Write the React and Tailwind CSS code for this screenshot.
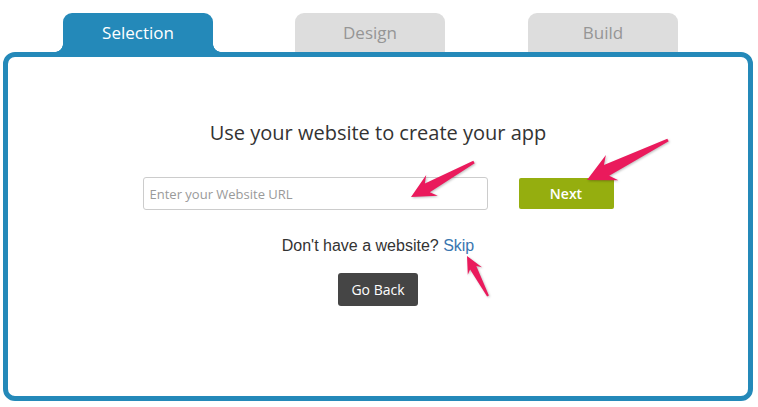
import React from "react";

const arrowPoints = (tail, tip, head, spread, neck, tailW) => {
  const dx = tail[0] - tip[0];
  const dy = tail[1] - tip[1];
  const len = Math.hypot(dx, dy);
  const ux = dx / len;
  const uy = dy / len;
  const px = -uy;
  const py = ux;
  const at = (a, b) =>
    `${(tip[0] + ux * a + px * b).toFixed(1)},${(tip[1] + uy * a + py * b).toFixed(1)}`;
  return [
    at(0, 0),
    at(head, -spread),
    at(head * 0.78, -neck),
    at(len, -tailW),
    at(len, tailW),
    at(head * 0.78, neck),
    at(head, spread),
  ].join(" ");
};

const Tab = ({ label, active }) => (
  <div
    className={`relative w-[150px] h-[39px] rounded-t-[9px] flex items-center justify-center text-[17px] ${
      active ? "bg-[#2489b9] text-white" : "bg-[#dddddd] text-[#959595]"
    }`}
  >
    {active && (
      <>
        <span className="absolute left-[-8px] bottom-0 w-[8px] h-[8px] bg-[radial-gradient(circle_at_0_0,transparent_7.5px,#2489b9_8px)]" />
        <span className="absolute right-[-8px] bottom-0 w-[8px] h-[8px] bg-[radial-gradient(circle_at_100%_0,transparent_7.5px,#2489b9_8px)]" />
      </>
    )}
    {label}
  </div>
);

export default function App() {
  return (
    <div className="relative w-[758px] h-[407px] bg-white overflow-hidden font-['Open_Sans',sans-serif]">
      {/* Steps */}
      <div className="flex pl-[63px] pt-[13px] gap-[82px]">
        <Tab label="Selection" active />
        <Tab label="Design" />
        <div className="ml-[1px]">
          <Tab label="Build" />
        </div>
      </div>

      {/* Panel */}
      <div className="ml-[3px] w-[750px] h-[349px] border-[5px] border-[#2489b9] rounded-[12px] flex flex-col items-center">
        <h1 className="mt-[62px] text-[20px] leading-[28px] text-[#333333]">
          Use your website to create your app
        </h1>

        <div className="mt-[30px] flex items-center gap-[31px]">
          <input
            type="text"
            placeholder="Enter your Website URL"
            className="w-[345px] h-[33px] border border-[#cccccc] rounded-[3px] pl-[6px] text-[13px] text-[#555] placeholder:text-[#9a9a9a] outline-none"
          />
          <button className="w-[95px] h-[31px] bg-[#95ae0f] rounded-[2px] text-white text-[14px] font-semibold">
            Next
          </button>
        </div>

        <p className="mt-[26px] text-[16px] leading-[20px] text-[#333333] font-['Liberation_Sans',Arial,sans-serif]">
          Don't have a website? <span className="text-[#3a76b0]">Skip</span>
        </p>

        <button className="mt-[17px] w-[80px] h-[33px] bg-[#454545] rounded-[3px] text-white text-[14px]">
          Go Back
        </button>
      </div>

      {/* Annotation arrows */}
      <svg
        className="absolute inset-0 pointer-events-none"
        width="758"
        height="407"
        viewBox="0 0 758 407"
      >
        <g fill="#ea1a5c" style={{ filter: "drop-shadow(1px 1px 1px rgba(0,0,0,0.25))" }}>
          <polygon points={arrowPoints([474, 162], [411, 197], 24, 12, 5, 1.5)} />
          <polygon points={arrowPoints([668, 140], [587, 180], 28, 14, 6, 1.5)} />
          <polygon points={arrowPoints([488, 296], [467, 256], 17, 8, 3.5, 1)} />
        </g>
      </svg>
    </div>
  );
}
